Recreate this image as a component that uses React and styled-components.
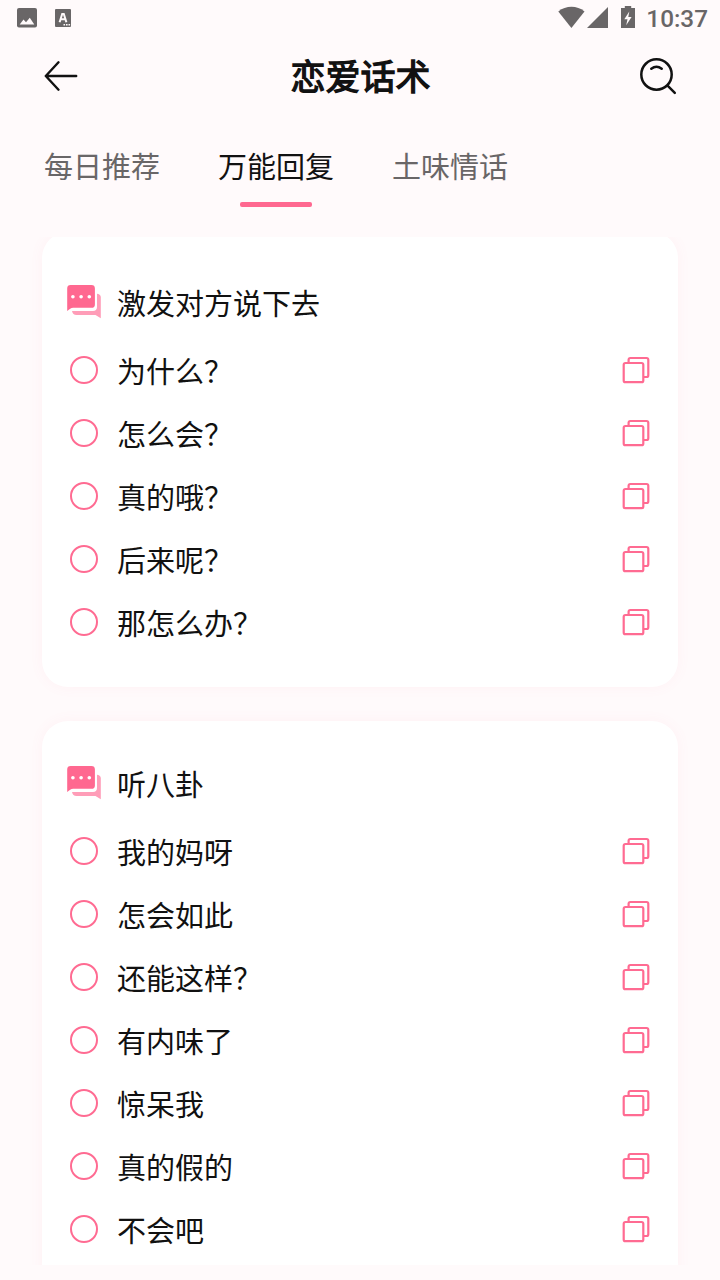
import React from 'react'
import styled, { createGlobalStyle } from 'styled-components'

const tabs = ['每日推荐', '万能回复', '土味情话']

const groups = [
  {
    title: '激发对方说下去',
    items: ['为什么？', '怎么会？', '真的哦？', '后来呢？', '那怎么办？'],
  },
  {
    title: '听八卦',
    items: ['我的妈呀', '怎会如此', '还能这样？', '有内味了', '惊呆我', '真的假的', '不会吧'],
  },
]

function StatusBar() {
  return (
    <Status>
      <svg width="80" height="36" viewBox="0 0 80 36">
        <rect x="17" y="8" width="20" height="19.5" rx="2" fill="#696667" />
        <path d="M19.7 24.5 L23.5 19.5 L26 22.2 L29.8 17.8 L34.3 24.5 Z" fill="#fffafb" />
        <rect x="55" y="9" width="16" height="18" rx="1" fill="#696667" />
        <path
          d="M59.6 22.2 L62.2 14 H63.8 L66.4 22.2 M60.8 19.2 H65.2"
          fill="none"
          stroke="#fffafb"
          strokeWidth="2"
        />
        <path d="M63.5 24h1.6v1.5h-1.6z M66 24h1.6v1.5H66z M68.5 24h1.6v1.5h-1.6z" fill="#fffafb" />
      </svg>
      <StatusRight>
        <svg width="82" height="36" viewBox="0 0 82 36">
          <path d="M0.3 11.5 C8 5.3 19 5.3 26.5 11.5 L13.4 28 Z" fill="#696667" />
          <path d="M29 28 L50 7 V28 Z" fill="#696667" />
          <path d="M63 8h3.8V6h6.4v2H77v20H63z" fill="#696667" />
          <path d="M71.3 11.5 L66.3 19.2 H69.5 L68.2 25.2 L73.6 17 H70.3 Z" fill="#fffafb" />
        </svg>
        <Clock>10:37</Clock>
      </StatusRight>
    </Status>
  )
}

function ChatIcon() {
  return (
    <svg width="36" height="36" viewBox="0 0 36 36">
      <path
        d="M30 9.8 C32 10 33.8 11 33.8 13 V34.3 L28.5 31 H9.5 C7 31 5.5 29.6 5 27 H26 C28.5 27 30 25.5 30 23 Z"
        fill="#ff9db8"
      />
      <path
        d="M3.6 1 H24.4 C26.8 1 27.9 2.2 27.9 4.4 V20.4 C27.9 22.7 26.8 23.8 24.4 23.8 H6.2 C3.8 23.8 2.6 25.2 0.2 27 V4.4 C0.2 2.2 1.4 1 3.6 1 Z"
        fill="#ff6890"
      />
      <circle cx="5.9" cy="12.7" r="1.8" fill="#fff" />
      <circle cx="14.1" cy="12.7" r="1.8" fill="#fff" />
      <circle cx="22.3" cy="12.7" r="1.8" fill="#fff" />
    </svg>
  )
}

function CopyIcon() {
  return (
    <svg width="28" height="28" viewBox="0 0 28 28" fill="none" stroke="#ff6b92" strokeWidth="2.2">
      <rect x="1.7" y="7" width="19.6" height="19.2" rx="1.8" />
      <path d="M6.6 7 V3.8 Q6.6 2 8.4 2 H24.5 Q26.3 2 26.3 3.8 V19.2 Q26.3 21 24.5 21 H21.3" />
    </svg>
  )
}

function Group({ title, items, first }) {
  return (
    <Card $first={first}>
      <CardHead>
        <ChatIcon />
        <HeadLabel>{title}</HeadLabel>
      </CardHead>
      {items.map((item) => (
        <Row key={item}>
          <Ring />
          <Label>{item}</Label>
          <CopyIcon />
        </Row>
      ))}
    </Card>
  )
}

function App() {
  return (
    <Page>
      <GlobalStyle />
      <StatusBar />
      <Header>
        <svg width="36" height="40" viewBox="0 0 36 40" fill="none" stroke="#111" strokeWidth="2.4" strokeLinecap="round" strokeLinejoin="round">
          <path d="M15.5 6.3 L2.8 20 L15.5 33.7 M2.8 20 H33.2" />
        </svg>
        <Title>恋爱话术</Title>
        <svg width="40" height="40" viewBox="0 0 40 40" fill="none" stroke="#111" strokeWidth="2.5" strokeLinecap="round">
          <circle cx="17.5" cy="18.5" r="15.2" />
          <path d="M12.3 12.7 Q17.5 8.7 22.7 12.7 M28.8 29.8 L35.8 36.8" />
        </svg>
      </Header>
      <Tabs>
        {tabs.map((tab, i) => (
          <Tab key={tab} $active={i === 1}>
            {tab}
          </Tab>
        ))}
      </Tabs>
      <List>
        {groups.map((group, i) => (
          <Group key={group.title} title={group.title} items={group.items} first={i === 0} />
        ))}
      </List>
    </Page>
  )
}

const GlobalStyle = createGlobalStyle`
body{
  margin: 0;
  background: #fffafb;
}

*{
  box-sizing: border-box;
}

svg{
  display: block;
  flex-shrink: 0;
}
`

const Page = styled.div`
  display: flex;
  flex-direction: column;
  height: 1280px;
  width: 720px;
  padding-bottom: 15px;
  overflow: hidden;
  background: #fffafb;
  color: #111;
  font-family: 'Noto Sans CJK SC', sans-serif;
`

const Status = styled.div`
  display: flex;
  justify-content: space-between;
  height: 36px;
  padding-right: 12px;
`

const StatusRight = styled.div`
  display: flex;
  align-items: center;
`

const Clock = styled.span`
  width: 68px;
  margin-top: 1px;
  text-align: right;
  white-space: nowrap;
  font-family: Roboto, sans-serif;
  font-size: 24.3px;
  font-weight: 500;
  line-height: 36px;
  color: #696667;
`

const Header = styled.header`
  display: flex;
  align-items: center;
  justify-content: space-between;
  height: 80px;
  padding: 0 41px 0 43px;
`

const Title = styled.h1`
  margin: 0 0 2px 3px;
  font-size: 35px;
  font-weight: 400;
  line-height: 50px;
  -webkit-text-stroke: 1.3px #111;
`

const Tabs = styled.nav`
  display: flex;
  gap: 58px;
  height: 121px;
  padding: 27px 44px 0;
`

const Tab = styled.div`
  display: flex;
  flex-direction: column;
  align-items: center;
  font-size: 29px;
  line-height: 44px;
  color: ${(p) => (p.$active ? '#111' : '#696667')};

  &::after{
    content: '';
    width: 72px;
    height: 5px;
    margin-top: 15px;
    border-radius: 2px;
    background: ${(p) => (p.$active ? '#ff6890' : 'transparent')};
  }
`

const List = styled.main`
  flex: 1;
  min-height: 0;
  padding: 0 42px;
  overflow: hidden;
`

const Card = styled.section`
  margin-top: ${(p) => (p.$first ? '-5px' : '34px')};
  padding: ${(p) => (p.$first ? '52px' : '44px')} 28px 34px 25px;
  border-radius: 26px;
  background: #fff;
  box-shadow: 0 0 14px rgba(255, 104, 144, 0.06);
`

const CardHead = styled.div`
  display: flex;
  align-items: flex-start;
  height: 54px;
  gap: 14px;
`

const Row = styled.div`
  display: flex;
  align-items: center;
  height: 63px;
`

const Label = styled.span`
  flex: 1;
  font-size: 29px;
  line-height: 40px;
`

const HeadLabel = styled(Label)`
  line-height: 36px;
`

const Ring = styled.span`
  width: 28px;
  height: 28px;
  margin: 0 19px 0 3px;
  border: 2px solid #ff6b92;
  border-radius: 50%;
`

export default App
